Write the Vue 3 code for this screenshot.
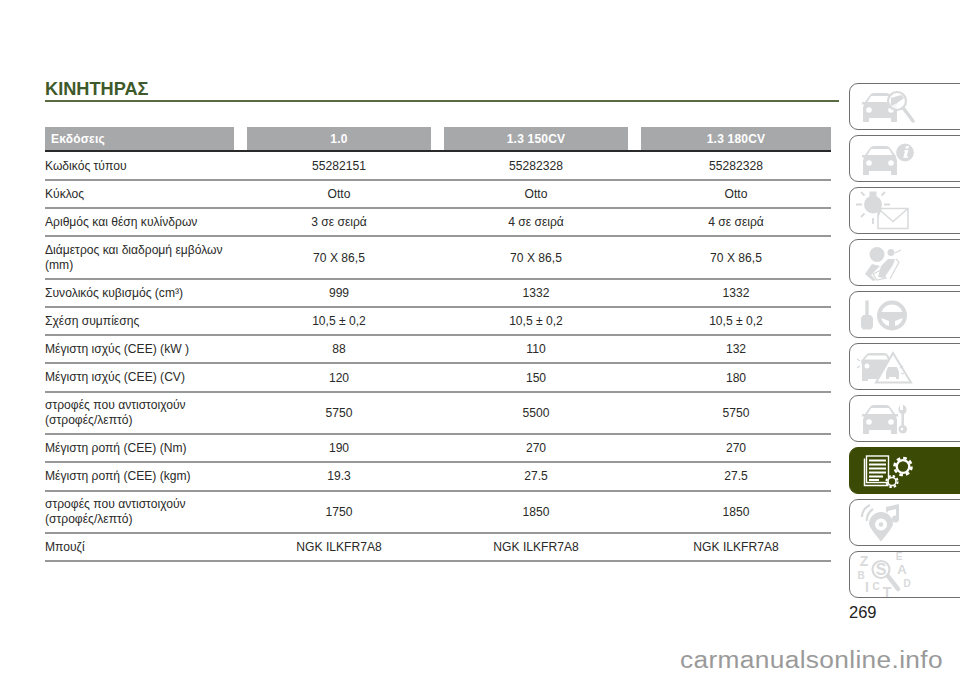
<script setup>
const columns = ['1.0', '1.3 150CV', '1.3 180CV']
const rows = [
  { label: 'Κωδικός τύπου', values: ['55282151', '55282328', '55282328'] },
  { label: 'Κύκλος', values: ['Otto', 'Otto', 'Otto'] },
  { label: 'Αριθμός και θέση κυλίνδρων', values: ['3 σε σειρά', '4 σε σειρά', '4 σε σειρά'] },
  { label: 'Διάμετρος και διαδρομή εμβόλων (mm)', values: ['70 X 86,5', '70 X 86,5', '70 X 86,5'], tall: true },
  { label: 'Συνολικός κυβισμός (cm³)', values: ['999', '1332', '1332'] },
  { label: 'Σχέση συμπίεσης', values: ['10,5 ± 0,2', '10,5 ± 0,2', '10,5 ± 0,2'] },
  { label: 'Μέγιστη ισχύς (CEE) (kW )', values: ['88', '110', '132'] },
  { label: 'Μέγιστη ισχύς (CEE) (CV)', values: ['120', '150', '180'] },
  { label: 'στροφές που αντιστοιχούν (στροφές/λεπτό)', values: ['5750', '5500', '5750'], tall: true },
  { label: 'Μέγιστη ροπή (CEE) (Nm)', values: ['190', '270', '270'] },
  { label: 'Μέγιστη ροπή (CEE) (kgm)', values: ['19.3', '27.5', '27.5'] },
  { label: 'στροφές που αντιστοιχούν (στροφές/λεπτό)', values: ['1750', '1850', '1850'], tall: true },
  { label: 'Μπουζί', values: ['NGK ILKFR7A8', 'NGK ILKFR7A8', 'NGK ILKFR7A8'] },
]
const tabs = [0, 1, 2, 3, 4, 5, 6, 7, 8, 9]
const car = 'M2 17h3l5-7q1-2 4-2h12q3 0 4 2l5 7h3v2.500h-2l1 3v14.500h-6v-4H9v4H3V22.500l1-3H2z'
const glass = 'M11 11h18l3.500 6H7.500z'
</script>

<template>
  <div class="page">
    <main class="content">
      <h1 class="title">ΚΙΝΗΤΗΡΑΣ</h1>
      <div class="table">
        <div class="head">
          <div class="hcell hlabel">Εκδόσεις</div>
          <div v-for="c in columns" :key="c" class="hcell">{{ c }}</div>
        </div>
        <div v-for="(r, i) in rows" :key="i" class="row" :class="{ tall: r.tall }">
          <div class="label">{{ r.label }}</div>
          <div v-for="(v, j) in r.values" :key="j" class="val">{{ v }}</div>
        </div>
      </div>
    </main>
    <aside class="side">
      <div v-for="t in tabs" :key="t" class="tab" :class="{ active: t === 7 }">
        <svg class="ico" viewBox="0 0 70 44" width="70" height="44">
          <g v-if="t === 0" fill="#d9dadb">
            <path :d="car"/>
            <path :d="glass" fill="#fff"/>
            <circle cx="9" cy="25" r="2.800" fill="#fff"/><circle cx="31" cy="25" r="2.800" fill="#fff"/>
            <circle cx="37" cy="16" r="9" fill="#fff" fill-opacity=".75" stroke="#d9dadb" stroke-width="2.200"/>
            <path d="M31 13l10-3 3 3-7 5-6 3z"/>
            <path d="M44 24l9 12" stroke="#d9dadb" stroke-width="3.500" stroke-linecap="round"/>
          </g>
          <g v-else-if="t === 1" fill="#d9dadb">
            <g transform="translate(0 1)">
              <path :d="car"/>
              <path :d="glass" fill="#fff"/>
              <circle cx="9" cy="25" r="2.800" fill="#fff"/><circle cx="31" cy="25" r="2.800" fill="#fff"/>
            </g>
            <circle cx="45" cy="15.500" r="9.500" stroke="#fff" stroke-width="1.200"/>
            <path d="M46 9h3l-.7 2.500h-3zM44.500 13h4l-1.800 6.300h1.600l-.4 1.400h-4.700l1.800-6.300h-1z" fill="#fff"/>
          </g>
          <g v-else-if="t === 2" fill="#d9dadb">
            <circle cx="13" cy="15.500" r="9"/>
            <rect x="9.500" y="2.500" width="7" height="5"/>
            <path d="M-4 15.500h6M24 15.500h6M1 3l3.500 3.500M25 3l-3.500 3.500M1 28l3.500-3.500M13 29v6" stroke="#d9dadb" stroke-width="1.800" fill="none"/>
            <path d="M18 19.500h30v20H18zM18 19.500l15 13 15-13" stroke="#d9dadb" stroke-width="1.500" fill="#fff"/>
            <path d="M18 19.500h4l-4 10z" fill="#d9dadb"/>
          </g>
          <g v-else-if="t === 3" fill="#d9dadb">
            <circle cx="17" cy="13.500" r="7.500"/>
            <circle cx="31" cy="11.500" r="3.500"/>
            <path d="M12 23l8 2-9 9 5 5-3 1-8-7z"/>
            <path d="M21 25l7-7 7 0-2 6-9 13-6-1z"/>
            <path d="M35 12l6-3M13 33l8-4 5 8-9 2zM36 18l3 3-9 17" stroke="#d9dadb" stroke-width="1.200" fill="none"/>
          </g>
          <g v-else-if="t === 4" fill="#d9dadb">
            <path d="M5.300 7.500h3.400V22h2l2.300 3v9l-2 2.500H3l-2-2.500v-9l2.300-3h2z"/>
            <path fill-rule="evenodd" d="M32 7.500a15 15 0 1 1 0 30a15 15 0 1 1 0-30zM32 11.500a11 11 0 0 0-10.300 7.500h20.600a11 11 0 0 0-10.300-7.500zM21.200 25a11 11 0 0 0 7.800 8.100V28zM42.800 25l-7.800 3v5.100a11 11 0 0 0 7.800-8.100z"/>
          </g>
          <g v-else-if="t === 5" fill="#d9dadb">
            <path d="M1 16l5-6q1-2 4-2h14q3 0 4 2l2 4-13 20H8v2H2V20z"/>
            <path d="M8 10.500h18l2 4H4.500z" fill="#fff"/>
            <circle cx="7" cy="21" r="2.500" fill="#fff"/>
            <path d="M-3 14l3 2M-3 23l3-2" stroke="#d9dadb" stroke-width="1.200"/>
            <path d="M33 8l18 29.500H16z" fill="#fff" stroke="#d9dadb" stroke-width="2"/>
            <path d="M28 22h9l2 5v7h-3v-2h-7v2h-3v-7z"/>
            <path d="M40 23l3-2M41 28l3 1" stroke="#d9dadb" stroke-width="1.200"/>
          </g>
          <g v-else-if="t === 6" fill="#d9dadb">
            <path :d="car"/>
            <path :d="glass" fill="#fff"/>
            <circle cx="9" cy="25" r="2.800" fill="#fff"/><circle cx="31" cy="25" r="2.800" fill="#fff"/>
            <path d="M40 7.500v5.500h3V7.500q4 2 3.500 6-.3 2.500-2.500 3.500v11q3.500 1.500 3 5-1 3.500-4 3.500-3.500 0-4.500-3.500-.5-3.500 3-5V17q-3-1.500-3-4.500 0-3 2.500-5z"/>
            <circle cx="42" cy="32" r="1.300" fill="#fff"/>
          </g>
          <g v-else-if="t === 7" fill="none" stroke="#fff">
            <rect x="6.500" y="7" width="22" height="26.500" stroke-width="1.400"/>
            <path d="M4.500 9.500v27h24" stroke-width="1.500"/>
            <path d="M9 11.500h17M9 15.500h17M9 19.500h17M9 23.500h17M9 27.500h14M9 31h10" stroke-width="2"/>
            <circle cx="43" cy="17.500" r="6.300" stroke-width="2.300" fill="#3b4a05"/>
            <circle cx="43" cy="17.500" r="8.500" stroke-width="2.600" stroke-dasharray="3.600 3.070"/>
            <circle cx="32" cy="32.500" r="4" stroke-width="1.600" fill="#3b4a05"/>
            <circle cx="32" cy="32.500" r="5.600" stroke-width="2" stroke-dasharray="2.400 2"/>
          </g>
          <g v-else-if="t === 8" fill="#d9dadb">
            <path fill-rule="evenodd" d="M21 11a12 12 0 0 1 12 12.500q-1 4-12 17q-11-13-12-17a12 12 0 0 1 12-12.500zM21 17.500a6 6 0 1 0 0 12a6 6 0 1 0 0-12z"/>
            <circle cx="21" cy="23.500" r="2.300"/>
            <path d="M26 10V6l13-3v15a3.500 3.500 0 1 1-3-3.500V8l-8 2v2z"/>
            <path d="M7 20q-1-7 6-12M2 16q0-8 8-12" stroke="#d9dadb" stroke-width="2.200" fill="none"/>
          </g>
          <g v-else-if="t === 9" class="letters">
            <circle cx="21" cy="16.500" r="8.500" fill="#fff" stroke="#d9dadb" stroke-width="2.200"/>
            <path d="M28 23l10 13" stroke="#d9dadb" stroke-width="4.500" stroke-linecap="round"/>
            <text x="4" y="12.500" font-size="14">Z</text>
            <text x="1" y="26" font-size="10">B</text>
            <text x="7" y="38.500" font-size="14">I</text>
            <text x="16" y="37" font-size="10">C</text>
            <text x="27" y="43.500" font-size="14">T</text>
            <text x="21" y="22" font-size="16">S</text>
            <text x="39" y="7" font-size="10">E</text>
            <text x="42" y="21" font-size="13">A</text>
            <text x="47" y="34" font-size="10">D</text>
          </g>
        </svg>
      </div>
      <div class="pageno">269</div>
    </aside>
    <div class="mark">carmanualsonline.info</div>
  </div>
</template>

<style>
html, body { margin: 0; background: #fff; overflow: hidden; }
</style>

<style scoped>
.page {
  width: 960px;
  height: 678px;
  display: flex;
  position: relative;
  overflow: hidden;
  font-family: "Liberation Sans", Arial, sans-serif;
  color: #2a2a28;
}
.content {
  width: 794px;
  margin-left: 45px;
  padding-top: 79px;
  flex: none;
}
.title {
  margin: 0;
  width: 794px;
  height: 21px;
  line-height: 20px;
  font-size: 18.200px;
  font-weight: 700;
  color: #3f5a2a;
  border-bottom: 2px solid #5b6b42;
}
.table { width: 786px; margin-top: 25px; }
.head {
  display: grid;
  grid-template-columns: 189px 184px 184px 190px;
  column-gap: 13px;
  height: 23px;
  margin-bottom: .7px;
  border-bottom: 2px solid #2a2a2a;
}
.hcell {
  background: #a7a8aa;
  color: #fff;
  font-size: 12px;
  font-weight: 700;
  display: flex;
  align-items: center;
  justify-content: center;
  letter-spacing: .2px;
}
.hlabel { justify-content: flex-start; padding-left: 6px; }
.row {
  display: grid;
  grid-template-columns: 189px 184px 184px 190px;
  column-gap: 13px;
  box-sizing: border-box;
  height: 28.200px;
  align-items: center;
  font-size: 12.100px;
  border-bottom: 2px solid #989898;
}
.row.tall { height: 42.600px; }
.label { line-height: 14.500px; }
.tall .label { padding-right: 10px; }
.val { text-align: center; }
.side {
  margin-left: 10px;
  padding-top: 83px;
  width: 111px;
  flex: none;
}
.tab {
  height: 45px;
  margin-bottom: 5px;
  width: 140px;
  border: 1px solid #6f6f6e;
  border-radius: 9px;
  background: #fff;
  display: flex;
  align-items: center;
}
.tab.active {
  background: #3b4a05;
  border-color: #3b4a05;
}
.ico { margin-left: 10px; flex: none; overflow: visible; }
.letters text {
  fill: #d9dadb;
  font-family: "Liberation Sans", Arial, sans-serif;
  font-weight: 700;
  text-anchor: middle;
}
.pageno {
  font-size: 16.500px;
  line-height: 20px;
  margin-top: -1px;
  color: #222;
}
.mark {
  position: absolute;
  left: 680px;
  top: 648px;
  font-size: 23px;
  color: #9a9a9a;
  letter-spacing: .3px;
  line-height: 24px;
  transform: scaleX(1.143);
  transform-origin: left center;
}
</style>
